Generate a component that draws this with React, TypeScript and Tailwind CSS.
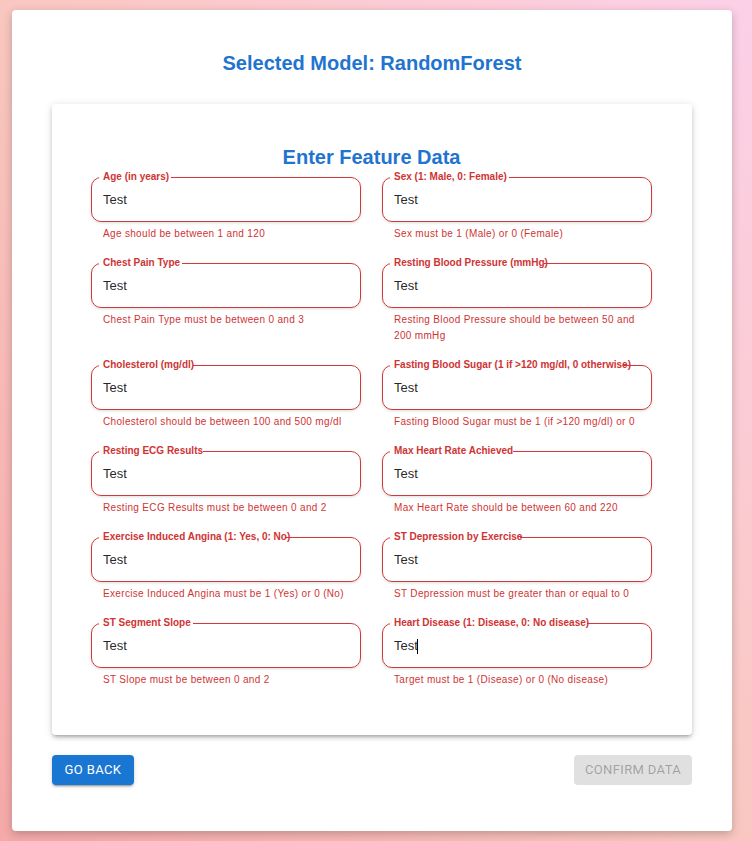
import React from "react";

const fields: { label: string; helper: string }[] = [
  { label: "Age (in years)", helper: "Age should be between 1 and 120" },
  { label: "Sex (1: Male, 0: Female)", helper: "Sex must be 1 (Male) or 0 (Female)" },
  { label: "Chest Pain Type", helper: "Chest Pain Type must be between 0 and 3" },
  { label: "Resting Blood Pressure (mmHg)", helper: "Resting Blood Pressure should be between 50 and 200 mmHg" },
  { label: "Cholesterol (mg/dl)", helper: "Cholesterol should be between 100 and 500 mg/dl" },
  { label: "Fasting Blood Sugar (1 if >120 mg/dl, 0 otherwise)", helper: "Fasting Blood Sugar must be 1 (if >120 mg/dl) or 0" },
  { label: "Resting ECG Results", helper: "Resting ECG Results must be between 0 and 2" },
  { label: "Max Heart Rate Achieved", helper: "Max Heart Rate should be between 60 and 220" },
  { label: "Exercise Induced Angina (1: Yes, 0: No)", helper: "Exercise Induced Angina must be 1 (Yes) or 0 (No)" },
  { label: "ST Depression by Exercise", helper: "ST Depression must be greater than or equal to 0" },
  { label: "ST Segment Slope", helper: "ST Slope must be between 0 and 2" },
  { label: "Heart Disease (1: Disease, 0: No disease)", helper: "Target must be 1 (Disease) or 0 (No disease)" },
];

function Field({ label, helper, focused }: { label: string; helper: string; focused?: boolean }) {
  return (
    <div className="flex flex-col">
      <div className="relative h-[45px]">
        <div className="absolute inset-0 rounded-[10px] shadow-[0_1px_3px_rgba(0,0,0,0.14)]" />
        <fieldset className="pointer-events-none absolute inset-x-0 bottom-0 top-[-5px] rounded-[10px] border border-[#d03a3a]">
          <legend className="invisible ml-[7px] h-[11px] whitespace-nowrap text-[10px] leading-[11px]">
            <span className="px-[5px]">{label}</span>
          </legend>
        </fieldset>
        <div className="relative flex h-full items-center pt-px pl-[12px] text-[13px] text-[rgba(0,0,0,0.87)]">
          <span>Test</span>
          {focused && <span className="ml-[-1px] inline-block h-[15px] w-px bg-black" />}
        </div>
        <div className="absolute left-[12px] top-[-6px] whitespace-nowrap text-[10px] font-bold leading-[12px] text-[#cf3434]">
          {label}
        </div>
      </div>
      <div className="mx-[12px] mt-[4px] text-[10px] leading-[16px] tracking-[0.033em] text-[#cf3434]">
        {helper}
      </div>
    </div>
  );
}

export default function App() {
  return (
    <div
      className="min-h-[841px] w-full bg-[linear-gradient(to_top_right,#f5a9a9,#f9c7c0_50%,#fcd0e8)] pt-[10px] pb-[10px]"
      style={{ fontFamily: '"Liberation Sans", Arial, sans-serif' }}
    >
      <div className="ml-[12px] flex w-[720px] flex-col rounded-[4px] bg-white px-[40px] pt-[41px] pb-[46px] shadow-[0_3px_10px_rgba(0,0,0,0.22)]">
        <h1 className="mb-[29px] text-center text-[20px] font-bold leading-[24px] text-[#1f74cf]">
          Selected Model: RandomForest
        </h1>
        <div className="rounded-[4px] bg-white pt-[41px] pb-[47px] pl-[39px] pr-[40px] shadow-[0_3px_3px_-2px_rgba(0,0,0,0.2),0_3px_4px_0_rgba(0,0,0,0.14),0_1px_8px_0_rgba(0,0,0,0.12)]">
          <h2 className="text-center text-[20px] font-bold leading-[24px] text-[#1f74cf]">Enter Feature Data</h2>
          <div className="mt-[8px] grid grid-cols-2 gap-x-[21px] gap-y-[21px]">
            {fields.map((f, i) => (
              <Field key={i} label={f.label} helper={f.helper} focused={i === fields.length - 1} />
            ))}
          </div>
        </div>
        <div
          className="mt-[20px] flex items-center justify-between"
          style={{ fontFamily: "Roboto, sans-serif" }}
        >
          <button className="flex h-[30px] w-[82px] items-center justify-center rounded-[4px] bg-[#1976d2] text-[13px] font-normal uppercase tracking-[0.02857em] text-white shadow-[0_3px_1px_-2px_rgba(0,0,0,0.2),0_2px_2px_0_rgba(0,0,0,0.14),0_1px_5px_0_rgba(0,0,0,0.12)]">
            Go Back
          </button>
          <button
            disabled
            className="flex h-[30px] w-[118px] items-center justify-center rounded-[4px] bg-[rgba(0,0,0,0.12)] text-[13px] font-normal uppercase tracking-[0.02857em] text-[rgba(0,0,0,0.3)]"
          >
            Confirm Data
          </button>
        </div>
      </div>
    </div>
  );
}
